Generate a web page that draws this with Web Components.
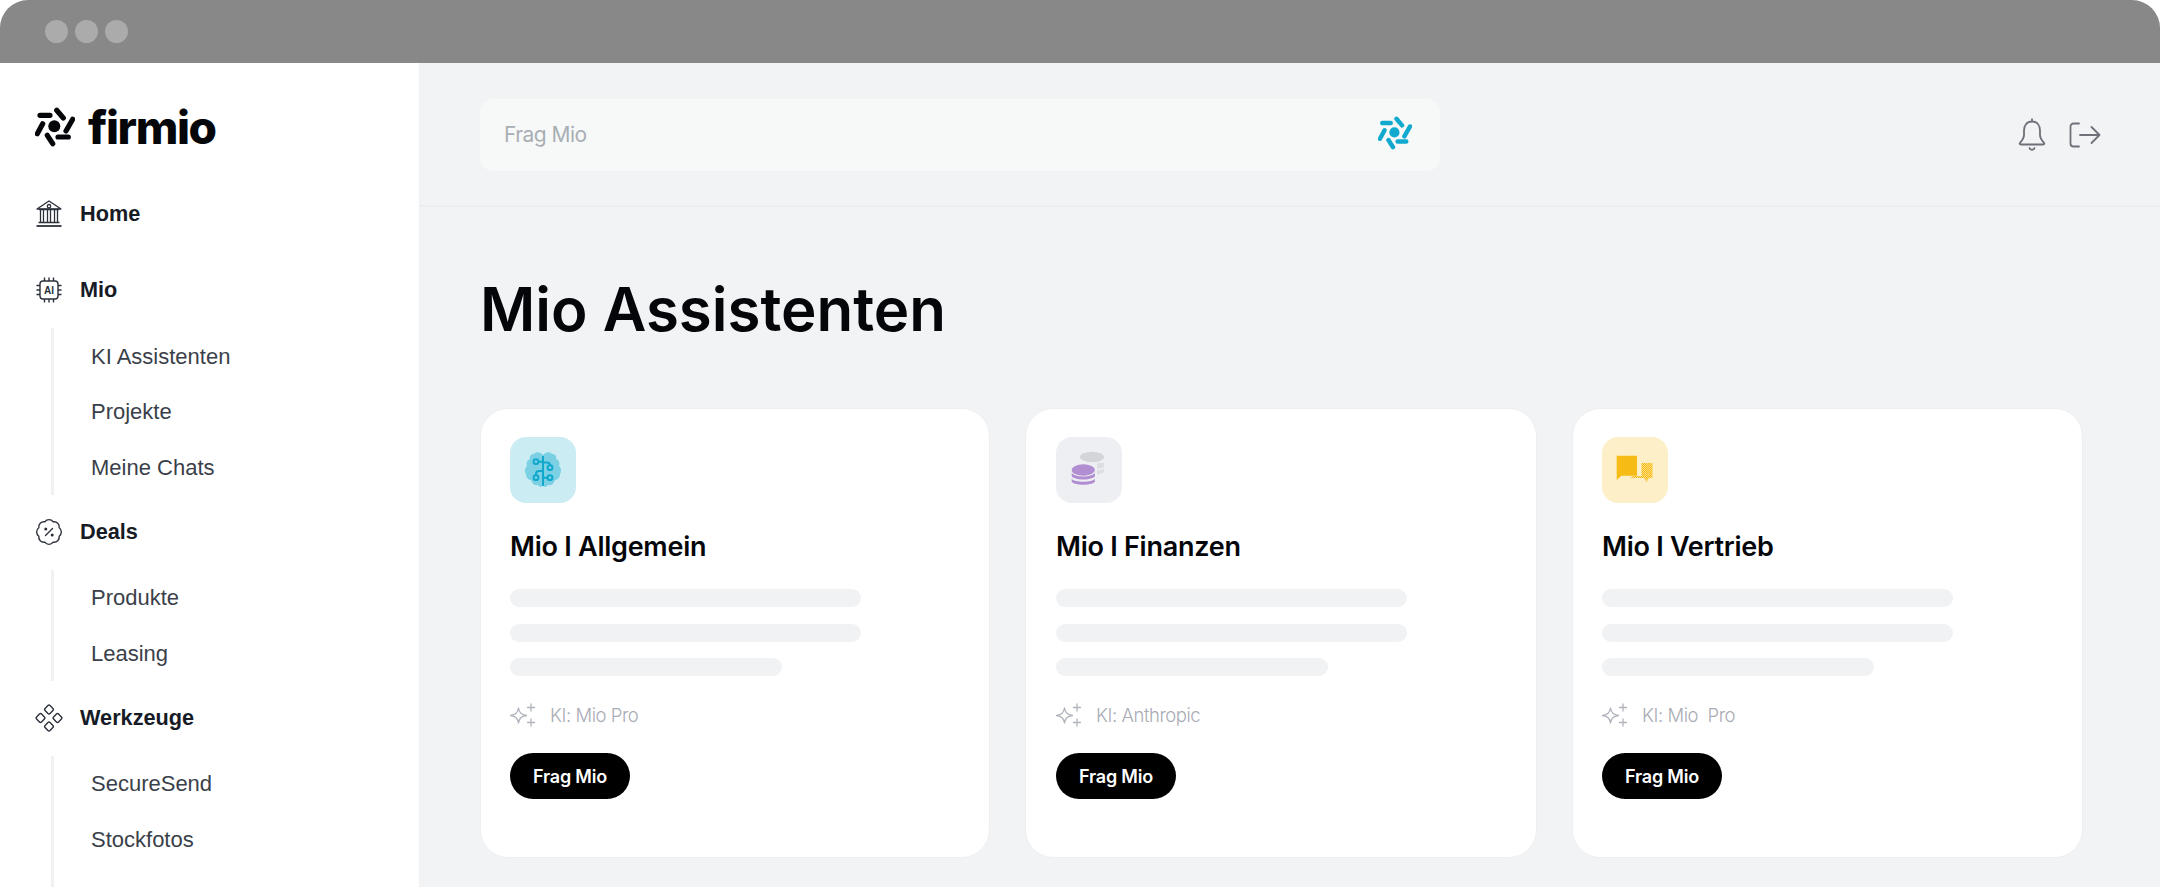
<!DOCTYPE html>
<html lang="de">
<head>
<meta charset="utf-8">
<title>firmio</title>
<style>
  html, body { margin: 0; background: #fff; }
  body { font-family: "Liberation Sans", Arial, sans-serif; }
  svg { display: block; }
</style>
</head>
<body>
<app-window>
  <side-nav slot="side">
    <nav-group label="Home" single>
      <svg slot="icon" width="28" height="30" viewBox="0 0 28 30" fill="none" stroke="#2b303b" stroke-width="1.3">
        <path d="M2 10 14 2l12 8z" stroke-linejoin="round"/><circle cx="14" cy="7.2" r="1.7"/>
        <path d="M4 10.5h20M5.5 11v12M8.5 11v12M12.5 11v12M15.5 11v12M19.5 11v12M22.5 11v12M3.5 23.5h21"/>
        <path d="M1.5 27h25" stroke-width="1.8"/>
      </svg>
    </nav-group>
    <nav-group label="Mio" first>
      <svg slot="icon" width="28" height="28" viewBox="0 0 28 28" fill="none" stroke="#2b303b" stroke-width="1.4">
        <rect x="5" y="5" width="18" height="18" rx="3"/>
        <path d="M9.5 1.5V5M14 1.5V5M18.5 1.5V5M9.5 23v3.5M14 23v3.5M18.5 23v3.5M1.5 9.5H5M1.5 14H5M1.5 18.5H5M23 9.5h3.5M23 14h3.5M23 18.5h3.5"/>
        <text x="14" y="17.7" text-anchor="middle" font-family="Liberation Sans" font-size="10" font-weight="700" fill="#2b303b" stroke="none">AI</text>
      </svg>
      <nav-sub>KI Assistenten</nav-sub>
      <nav-sub>Projekte</nav-sub>
      <nav-sub>Meine Chats</nav-sub>
    </nav-group>
    <nav-group label="Deals">
      <svg slot="icon" width="28" height="28" viewBox="0 0 28 28" fill="none" stroke="#2b303b" stroke-width="1.4">
        <path d="M24.2 9.8A5.2 5.2 0 0 1 24.2 18.2A5.2 5.2 0 0 1 18.2 24.2A5.2 5.2 0 0 1 9.8 24.2A5.2 5.2 0 0 1 3.8 18.2A5.2 5.2 0 0 1 3.8 9.8A5.2 5.2 0 0 1 9.8 3.8A5.2 5.2 0 0 1 18.2 3.8A5.2 5.2 0 0 1 24.2 9.8Z"/>
        <path d="M10.5 17.5l7-7" stroke-linecap="round"/>
        <circle cx="10.8" cy="11" r=".8" fill="#2b303b"/><circle cx="17.2" cy="17" r=".8" fill="#2b303b"/>
      </svg>
      <nav-sub>Produkte</nav-sub>
      <nav-sub>Leasing</nav-sub>
    </nav-group>
    <nav-group label="Werkzeuge">
      <svg slot="icon" width="28" height="28" viewBox="0 0 28 28" fill="none" stroke="#2b303b" stroke-width="1.4">
        <rect x="10.5" y="2" width="7" height="7" rx="1.5" transform="rotate(45 14 5.5)"/>
        <rect x="2" y="10.5" width="7" height="7" rx="1.5" transform="rotate(45 5.5 14)"/>
        <rect x="19" y="10.5" width="7" height="7" rx="1.5" transform="rotate(45 22.5 14)"/>
        <rect x="10.5" y="19" width="7" height="7" rx="1.5" transform="rotate(45 14 22.5)"/>
      </svg>
      <nav-sub>SecureSend</nav-sub>
      <nav-sub>Stockfotos</nav-sub>
      <nav-sub></nav-sub>
    </nav-group>
  </side-nav>

  <top-bar slot="top"></top-bar>

  <assistant-page slot="page" heading="Mio Assistenten">
    <assistant-card name="Mio I Allgemein" model="KI: Mio Pro" tile="#cbecf3" inset="29">
      <svg slot="icon" width="38" height="38" viewBox="0 0 38 38">
        <path d="M19 4C17 1 12 0 10 3 7 3 5 5 6 8 3 9 2 12 3 15 1 17 0 20 2 23 2 27 5 29 7 29 8 33 11 35 14 34 16 37 18 36 19 34 20 36 22 37 24 34 27 35 30 33 31 29 33 29 36 27 36 23 38 20 37 17 35 15 36 12 35 9 32 8 33 5 31 3 28 3 26 0 21 1 19 4Z" fill="#7bd1e3"/>
        <g fill="none" stroke="#11a8cd" stroke-width="2">
          <path d="M19 5v30M14 10.7h5M19 20h-4c-2 0-3 1-3 3v1.5M19 26.7h4.5M19 11.5h4c2 0 3 1 3 3"/>
          <circle cx="12" cy="10.7" r="2.4"/><circle cx="26" cy="16.7" r="2.4"/><circle cx="12" cy="26.7" r="2.4"/><circle cx="26" cy="26.7" r="2.4"/>
        </g>
      </svg>
    </assistant-card>
    <assistant-card name="Mio I Finanzen" model="KI: Anthropic" tile="#eeeff3" inset="30">
      <svg slot="icon" width="38" height="38" viewBox="0 0 38 38">
        <ellipse cx="22" cy="6" rx="12" ry="5.2" fill="#d3d5da"/>
        <path d="M27 12h7v4.5l-7 1.5zM27 19.5l7-1.5v2.5c0 1-3 2.5-7 3z" fill="#dcdee2"/>
        <ellipse cx="13.3" cy="19" rx="11.6" ry="5.8" fill="#b18ed1"/>
        <path d="M1.7 22c2 2.2 6 3.5 11.6 3.5S22.9 24.2 24.9 22v3c0 1.5-5 3.5-11.6 3.5S1.7 26.5 1.7 25zM1.7 28c2 1.8 6 2.8 11.6 2.8S22.9 29.8 24.9 28v2.2c0 1.8-5 3.5-11.6 3.5S1.7 32 1.7 30.2z" fill="#b18ed1"/>
      </svg>
    </assistant-card>
    <assistant-card name="Mio I Vertrieb" model="KI: Mio  Pro" tile="#fdf0c9" inset="29">
      <svg slot="icon" width="38" height="38" viewBox="0 0 38 38">
        <defs><pattern id="dith" width="2" height="2" patternUnits="userSpaceOnUse"><rect width="2" height="2" fill="#fbdc80"/><rect width="1" height="1" fill="#f6bb14"/><rect x="1" y="1" width="1" height="1" fill="#f6bb14"/></pattern></defs>
        <path d="M25.5 12h11v15h-3.5l-2.5 4-2.5-4H18c-2 0-3.2 1-3.5-.5 1-1 2-1.5 3-1.5h8z" fill="url(#dith)"/>
        <path d="M.7 4.700H21v20H5.500L.7 29z" fill="#f6bb14"/>
      </svg>
    </assistant-card>
  </assistant-page>
</app-window>

<script>
// pinwheel mark, used for the logo and in the search box
const markSvg = (w, h) => `
  <svg width="${w}" height="${h}" viewBox="0 0 40 40" fill="none" stroke="currentColor" stroke-width="5.2" stroke-linecap="round">
    <path d="M5 8.3H15M21.7 3.3 28.3 11M37.7 12.3 31 24M23 30H33.3M12.3 28.3 17.7 36.700M7.700 16.700 2.300 26.700"/>
    <circle cx="19.3" cy="19.3" r="6" fill="currentColor" stroke="none"/>
  </svg>`;

class AppWindow extends HTMLElement {
  constructor() {
    super();
    this.attachShadow({ mode: 'open' }).innerHTML = `
      <style>
        :host { display: flex; flex-direction: column; height: 887px; overflow: hidden; background: #fff; }
        .chrome { flex: none; height: 63px; background: #888; border-radius: 28px 28px 0 0; display: flex; align-items: center; gap: 7px; padding: 0 0 0 45px; box-sizing: border-box; }
        .chrome i { width: 23px; height: 23px; border-radius: 50%; background: #ababab; }
        .body { flex: 1; min-height: 0; display: grid; grid-template-columns: 419px 1fr; }
        .main { background: #f2f3f5; display: flex; flex-direction: column; min-width: 0; border-left: 1px solid #eef0f2; }
      </style>
      <div class="chrome"><i></i><i></i><i></i></div>
      <div class="body">
        <slot name="side"></slot>
        <div class="main"><slot name="top"></slot><slot name="page"></slot></div>
      </div>`;
  }
}

class SideNav extends HTMLElement {
  constructor() {
    super();
    this.attachShadow({ mode: 'open' }).innerHTML = `
      <style>
        :host { display: block; background: #fff; overflow: hidden; padding: 44px 0 0 35px; }
        .logo { display: flex; align-items: center; gap: 13px; color: #05060a; height: 40px; margin-bottom: 47.5px; }
        .logo b { font: 800 46px/40px Inter, sans-serif; letter-spacing: -1.4px; }
      </style>
      <div class="logo">${markSvg(40, 40)}<b>firmio</b></div>
      <slot></slot>`;
  }
}

class NavGroup extends HTMLElement {
  constructor() {
    super();
    const single = this.hasAttribute('single');
    const first = this.hasAttribute('first');
    this.attachShadow({ mode: 'open' }).innerHTML = `
      <style>
        :host { display: block; margin-bottom: ${single ? 38 : 18}px; }
        .head { display: flex; align-items: center; height: 38px; color: #171b26; font: 700 21.7px/38px "Liberation Sans", Arial, sans-serif; }
        .ico { width: 45px; flex: none; }
        .sub { display: ${single ? 'none' : 'block'}; margin: 19px 0 0 16px; padding: ${first ? 1 : 0}px 0 0 37px; border-left: 3px solid #f0f1f3; }
      </style>
      <div class="head"><span class="ico"><slot name="icon"></slot></span><span>${this.getAttribute('label')}</span></div>
      <div class="sub"><slot></slot></div>`;
  }
}

class NavSub extends HTMLElement {
  constructor() {
    super();
    this.attachShadow({ mode: 'open' }).innerHTML = `
      <style>
        :host { display: block; height: 55.5px; font: 400 22px/55.5px "Liberation Sans", Arial, sans-serif; color: #3a3f4a; }
      </style>
      <slot></slot>`;
  }
}

class TopBar extends HTMLElement {
  constructor() {
    super();
    this.attachShadow({ mode: 'open' }).innerHTML = `
      <style>
        :host { display: flex; align-items: center; justify-content: space-between; flex: none; height: 144px; box-sizing: border-box; padding: 0 59px 0 60px; border-bottom: 2px solid #ebedef; }
        .search { width: 960px; height: 72px; box-sizing: border-box; margin-top: 1px; background: #f7f9f9; border-radius: 14px; padding: 0 28px 0 24px; display: flex; align-items: center; justify-content: space-between; }
        .search span { font: 400 21px Inter, sans-serif; letter-spacing: -.55px; color: #a9aeb3; }
        .search div { color: #12a9cf; }
        .tools { display: flex; align-items: center; gap: 22px; color: #6f7178; margin-top: 1px; }
      </style>
      <div class="search"><span>Frag Mio</span><div>${markSvg(34, 36)}</div></div>
      <div class="tools">
        <svg width="30" height="35" viewBox="0 0 30 35" fill="none" stroke="currentColor" stroke-width="1.8" stroke-linejoin="round">
          <path d="M15 1.5v3M15 4.5c-5.5 0-8 4.2-8 9v4.5c0 3-1 4.5-4 7.8-.7.8-.2 1.7.8 1.7h22.400c1 0 1.500-.9.800-1.700-3-3.300-4-4.800-4-7.800v-4.500c0-4.800-2.500-9-8-9z"/>
          <path d="M12.5 31c.6 2.400 4.400 2.400 5 0" stroke-linecap="round"/>
        </svg>
        <svg width="32" height="26" viewBox="0 0 32 26" fill="none" stroke="currentColor" stroke-width="1.8" stroke-linecap="round" stroke-linejoin="round">
          <path d="M10 1.5H4.5a3 3 0 0 0-3 3v17a3 3 0 0 0 3 3H10"/>
          <path d="M11 13H30M22.5 5l8 8-8 8"/>
        </svg>
      </div>`;
  }
}

class AssistantPage extends HTMLElement {
  constructor() {
    super();
    this.attachShadow({ mode: 'open' }).innerHTML = `
      <style>
        :host { display: block; padding: 0 77px 0 60px; }
        h1 { margin: 0; padding: 66px 0 63px; font: 600 60px/72px Inter, sans-serif; color: #05060a; }
        .grid { display: grid; grid-template-columns: 510px 512px 511px; gap: 35px; }
      </style>
      <h1>${this.getAttribute('heading')}</h1>
      <div class="grid"><slot></slot></div>`;
  }
}

class AssistantCard extends HTMLElement {
  constructor() {
    super();
    this.attachShadow({ mode: 'open' }).innerHTML = `
      <style>
        :host { display: block; box-sizing: border-box; height: 450px; background: #fff; border: 1px solid #eceef0; border-radius: 28px; padding: 28px 20px 0 ${this.getAttribute('inset')}px; }
        .tile { width: 66px; height: 66px; border-radius: 16px; background: ${this.getAttribute('tile')}; display: flex; align-items: center; justify-content: center; }
        h3 { margin: 26px 0 24px; font: 600 27px/36px Inter, sans-serif; letter-spacing: -.25px; color: #05060a; }
        .bar { width: 351px; height: 18px; border-radius: 9px; background: #f1f2f4; margin-bottom: 16.5px; }
        .bar.short { width: 272px; margin-bottom: 0; }
        .ki { display: flex; align-items: center; gap: 13px; height: 24px; margin-top: 27px; font: 300 18.5px/24px Inter, sans-serif; letter-spacing: -.45px; color: #a9acb5; white-space: pre; }
        .btn { display: inline-flex; align-items: center; justify-content: center; width: 120px; height: 46px; margin-top: 26px; border-radius: 23px; background: #000; color: #fff; font: 600 18px Inter, sans-serif; letter-spacing: -.2px; }
      </style>
      <div class="tile"><slot name="icon"></slot></div>
      <h3>${this.getAttribute('name')}</h3>
      <div class="bar"></div>
      <div class="bar"></div>
      <div class="bar short"></div>
      <div class="ki">
        <svg width="27" height="24" viewBox="0 0 27 24" fill="none" stroke="#b1b4bc" stroke-width="1.3" stroke-linejoin="round" stroke-linecap="round">
          <path d="M8.5 5c.9 4.8 2.7 6.6 8 7.500-5.300.9-7.100 2.700-8 7.500-.9-4.800-2.700-6.600-8-7.500 5.300-.9 7.100-2.700 8-7.500z"/>
          <path d="M21 1v7M17.5 4.5h7M21 16v7M17.5 19.5h7"/>
        </svg>
        <span>${this.getAttribute('model')}</span>
      </div>
      <div class="btn">Frag Mio</div>`;
  }
}

customElements.define('app-window', AppWindow);
customElements.define('side-nav', SideNav);
customElements.define('nav-group', NavGroup);
customElements.define('nav-sub', NavSub);
customElements.define('top-bar', TopBar);
customElements.define('assistant-page', AssistantPage);
customElements.define('assistant-card', AssistantCard);
</script>
</body>
</html>
